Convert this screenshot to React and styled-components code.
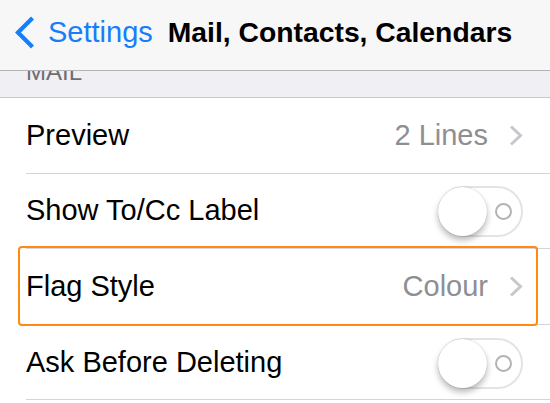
import React from "react";
import styled, { createGlobalStyle } from "styled-components";

const Global = createGlobalStyle`
  html, body { margin: 0; padding: 0; background: #ffffff; }
  body { font-family: "Liberation Sans", Arial, Helvetica, sans-serif; -webkit-font-smoothing: antialiased; }
`;

const Screen = styled.div`
  width: 550px;
  height: 403px;
  overflow: hidden;
  background: #ffffff;
  display: flex;
  flex-direction: column;
`;

const NavBar = styled.div`
  height: 70px;
  flex: 0 0 auto;
  box-sizing: content-box;
  background: #f7f7f8;
  border-bottom: 1px solid #b4b4b6;
  display: flex;
  align-items: center;
  padding: 0 0 5px 14px;
  box-sizing: border-box;
  height: 71px;
`;

const BackButton = styled.div`
  display: flex;
  align-items: center;
  gap: 13px;
  color: #157efb;
  font-size: 29px;
  line-height: 1;
`;

const Title = styled.div`
  margin-left: 15px;
  font-size: 28.3px;
  font-weight: 700;
  line-height: 1;
  color: #000000;
  white-space: nowrap;
`;

const SectionHeader = styled.div`
  height: 27px;
  box-sizing: border-box;
  flex: 0 0 auto;
  background: #efeff4;
  border-bottom: 1px solid #c8c7cc;
  overflow: hidden;
  padding-left: 26px;
`;

const SectionTitle = styled.div`
  margin-top: -11px;
  font-size: 24px;
  line-height: 24px;
  color: #6d6d72;
  text-transform: uppercase;
`;

const List = styled.div`
  display: flex;
  flex-direction: column;
  padding-left: 26px;
`;

const Row = styled.div`
  position: relative;
  height: 75.6px;
  box-sizing: border-box;
  border-bottom: 1px solid #d4d4d8;
  display: flex;
  align-items: center;
  padding-right: 27px;
  flex: 0 0 auto;
`;

const Label = styled.div`
  flex: 1;
  font-size: 29px;
  line-height: 1;
  color: #000000;
  white-space: nowrap;
`;

const Value = styled.div`
  font-size: 29px;
  line-height: 1;
  color: #8e8e93;
  margin-right: 21px;
  white-space: nowrap;
`;

const Track = styled.div`
  position: relative;
  width: 85px;
  height: 51px;
  box-sizing: border-box;
  border: 2px solid #e4e4e6;
  border-radius: 26px;
  background: #ffffff;
  margin-top: 2px;
`;

const Knob = styled.div`
  position: absolute;
  left: -2px;
  top: -1px;
  width: 49px;
  height: 49px;
  border-radius: 50%;
  background: #ffffff;
  box-shadow: 0 4px 6px rgba(0, 0, 0, 0.28), 0 0 1px rgba(0, 0, 0, 0.25);
`;

const OffRing = styled.div`
  position: absolute;
  right: 9px;
  top: 50%;
  width: 17px;
  height: 17px;
  margin-top: -8.5px;
  box-sizing: border-box;
  border: 2.5px solid #b3b3b5;
  border-radius: 50%;
`;

const Highlight = styled.div`
  position: absolute;
  left: -8px;
  right: 12px;
  top: -3px;
  bottom: -2px;
  border: 2.5px solid #ff8a0f;
  border-radius: 4px;
  pointer-events: none;
`;

const BackChevron = () => (
  <svg width="21" height="33" viewBox="0 0 21 33" aria-hidden="true">
    <polyline
      points="18.5,2 4,16.5 18.5,31"
      fill="none"
      stroke="#157efb"
      strokeWidth="4.2"
      strokeLinejoin="miter"
      strokeLinecap="butt"
    />
  </svg>
);

const Disclosure = () => (
  <svg width="14" height="21" viewBox="0 0 14 21" aria-hidden="true">
    <polyline
      points="2,1.5 11.5,10.5 2,19.5"
      fill="none"
      stroke="#c7c7cc"
      strokeWidth="3"
      strokeLinejoin="miter"
    />
  </svg>
);

const Toggle = () => (
  <Track>
    <OffRing />
    <Knob />
  </Track>
);

export default function App() {
  return (
    <>
      <Global />
      <Screen>
        <NavBar>
          <BackButton>
            <BackChevron />
            <span>Settings</span>
          </BackButton>
          <Title>Mail, Contacts, Calendars</Title>
        </NavBar>
        <SectionHeader>
          <SectionTitle>Mail</SectionTitle>
        </SectionHeader>
        <List>
          <Row>
            <Label>Preview</Label>
            <Value>2 Lines</Value>
            <Disclosure />
          </Row>
          <Row>
            <Label>Show To/Cc Label</Label>
            <Toggle />
          </Row>
          <Row>
            <Label>Flag Style</Label>
            <Value>Colour</Value>
            <Disclosure />
            <Highlight />
          </Row>
          <Row>
            <Label>Ask Before Deleting</Label>
            <Toggle />
          </Row>
        </List>
      </Screen>
    </>
  );
}
